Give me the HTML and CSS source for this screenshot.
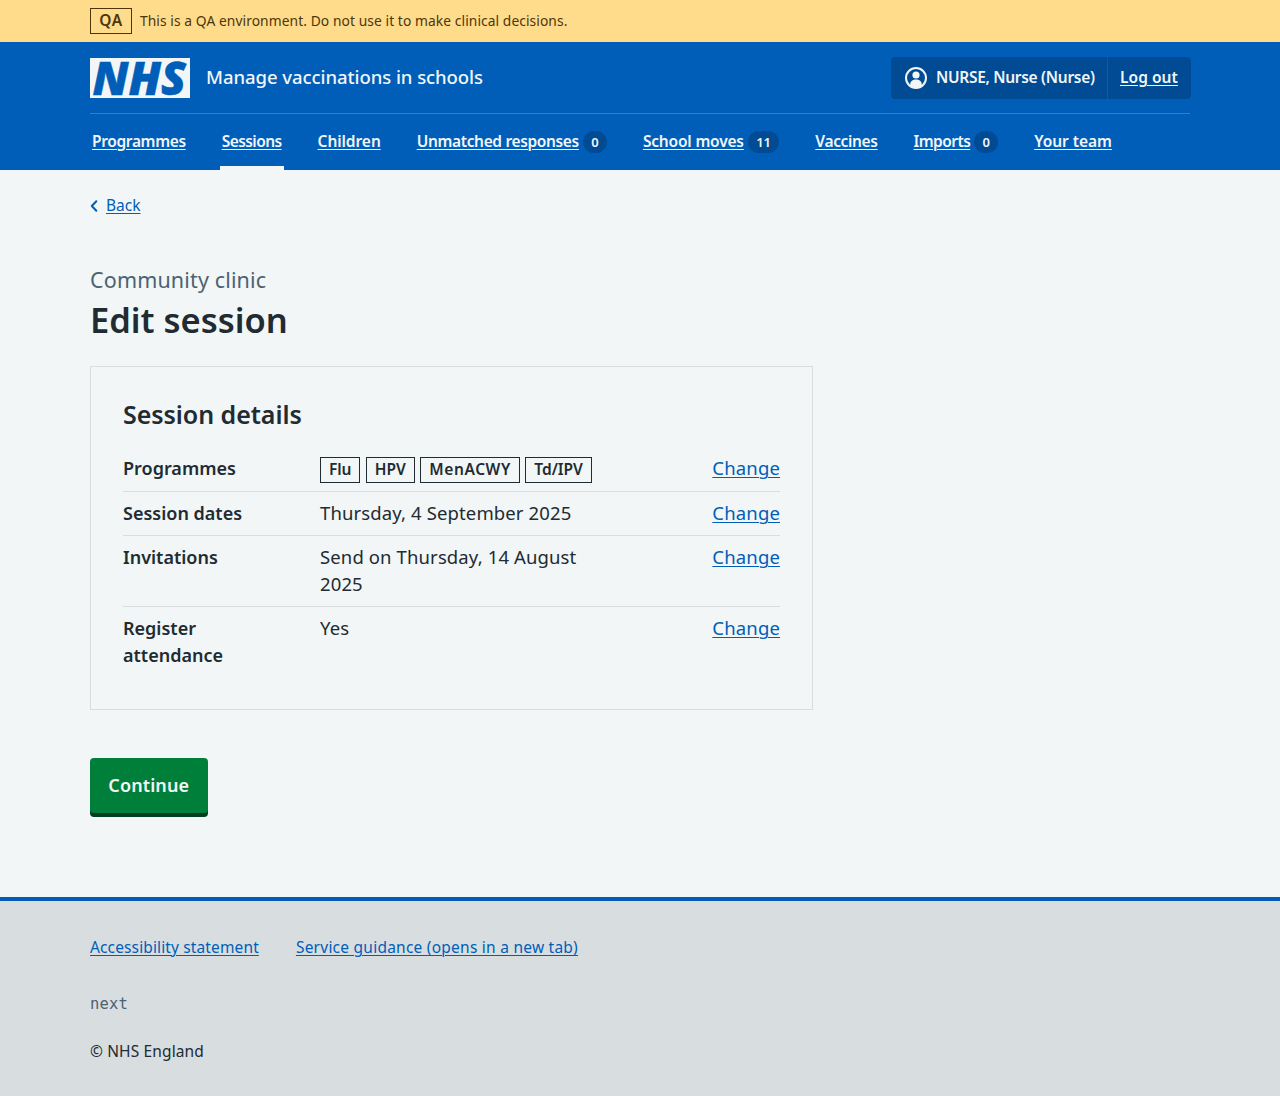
FILE: index.html
```html
<!DOCTYPE html>
<html lang="en">
<head>
<meta charset="utf-8">
<title>Edit session</title>
<link rel="stylesheet" href="styles.css">
</head>
<body>
<div class="environment">
  <div class="container environment-row">
    <strong class="environment-tag">QA</strong>
    <span class="environment-text">This is a QA environment. Do not use it to make clinical decisions.</span>
  </div>
</div>
<header class="header">
  <div class="container header-top">
    <a class="brand" href="#">
      <svg class="logo" viewBox="0 0 100 40" role="img" aria-label="NHS">
        <rect width="100" height="40" fill="#f2f6f7"/>
        <text class="logo-text" x="2.500" y="36.500" textLength="93.500" lengthAdjust="spacingAndGlyphs">NHS</text>
      </svg>
      <span class="service">Manage vaccinations in schools</span>
    </a>
    <div class="account">
      <div class="account-user">
        <svg class="user-icon" viewBox="0 0 24 24" aria-hidden="true">
          <circle cx="12" cy="12" r="10" fill="none" stroke="currentColor" stroke-width="2"/>
          <circle cx="12" cy="9" r="3.600" fill="currentColor"/>
          <path d="M6.200 20v-1.500c0-3.200 2.600-5 5.800-5s5.800 1.800 5.800 5V20a10 10 0 0 1-11.600 0z" fill="currentColor"/>
        </svg>
        <span>NURSE, Nurse (Nurse)</span>
      </div>
      <div class="account-logout"><a href="#">Log out</a></div>
    </div>
  </div>
  <nav class="container nav">
    <a class="nav-item" href="#"><span class="nav-label">Programmes</span></a>
    <a class="nav-item current tight" href="#"><span class="nav-label">Sessions</span></a>
    <a class="nav-item loose" href="#"><span class="nav-label">Children</span></a>
    <a class="nav-item" href="#"><span class="nav-label">Unmatched responses</span><span class="count">0</span></a>
    <a class="nav-item slack" href="#"><span class="nav-label">School moves</span><span class="count">11</span></a>
    <a class="nav-item" href="#"><span class="nav-label">Vaccines</span></a>
    <a class="nav-item tight" href="#"><span class="nav-label">Imports</span><span class="count">0</span></a>
    <a class="nav-item loose" href="#"><span class="nav-label">Your team</span></a>
  </nav>
</header>
<main class="container main">
  <a class="back" href="#">
    <svg class="chevron" viewBox="0 0 8 12" aria-hidden="true"><path d="M6.300 1.200 1.800 6l4.500 4.800" fill="none" stroke="currentColor" stroke-width="2" stroke-linecap="round" stroke-linejoin="round"/></svg>
    <span>Back</span>
  </a>
  <h1 class="title"><span class="caption">Community clinic</span><span class="heading">Edit session</span></h1>
  <section class="card">
    <h2 class="card-title">Session details</h2>
    <dl class="summary">
      <div class="row">
        <dt>Programmes</dt>
        <dd class="value tags"><strong class="tag tag-flu">Flu</strong><strong class="tag tag-hpv">HPV</strong><strong class="tag tag-menacwy">MenACWY</strong><strong class="tag">Td/IPV</strong></dd>
        <dd class="action"><a href="#">Change</a></dd>
      </div>
      <div class="row">
        <dt>Session dates</dt>
        <dd class="value">Thursday, 4 September 2025</dd>
        <dd class="action"><a href="#">Change</a></dd>
      </div>
      <div class="row">
        <dt>Invitations</dt>
        <dd class="value">Send on Thursday, 14 August<br>2025</dd>
        <dd class="action"><a href="#">Change</a></dd>
      </div>
      <div class="row">
        <dt>Register<br>attendance</dt>
        <dd class="value">Yes</dd>
        <dd class="action"><a href="#">Change</a></dd>
      </div>
    </dl>
  </section>
  <button class="button" type="button">Continue</button>
</main>
<footer class="footer">
  <div class="container">
    <div class="footer-links"><a href="#">Accessibility statement</a><a href="#">Service guidance (opens in a new tab)</a></div>
    <p class="version">next</p>
    <p class="copyright">© NHS England</p>
  </div>
</footer>
</body>
</html>
```
FILE: styles.css
```css
* { box-sizing: border-box; }
body {
  margin: 0;
  min-height: 1096px;
  display: flex;
  flex-direction: column;
  background: #f2f6f7;
  color: #212b32;
  font-family: "Noto Sans", "Open Sans", sans-serif;
  font-size: 18px;
  line-height: 27px;
}
a { color: #005eb8; text-underline-offset: 2px; text-decoration-thickness: 1px; }
.container { width: 1100px; margin: 0 auto; }

.environment { height: 42px; background: #ffdb8c; color: #4d3708; }
.environment-row { height: 42px; display: flex; align-items: center; gap: 8px; }
.environment-tag {
  height: 26px;
  width: 42px;
  border: 1px solid #4d3708;
  font-size: 15.5px;
  letter-spacing: 0.5px;
  font-weight: 600;
  line-height: 23px;
  text-align: center;
}
.environment-text { padding-bottom: 2px; font-size: 13.8px; letter-spacing: 0.08px; }

.header { height: 128px; background: #005eb8; color: #f2f6f7; }
.header a { color: #f2f6f7; }
.header-top {
  height: 72px;
  display: flex;
  align-items: center;
  justify-content: space-between;
  border-bottom: 1px solid #337ec6;
}
.brand { display: flex; align-items: center; gap: 16px; text-decoration: none; }
.logo { width: 100px; height: 40px; display: block; overflow: visible; }
.logo-text { font: italic 800 45.5px "Open Sans", "Noto Sans", sans-serif; fill: #005eb8; stroke: #005eb8; stroke-width: 0.5px; }
.service { padding-bottom: 2px; font-size: 18.5px; font-weight: 500; letter-spacing: -0.06px; }
.account {
  display: flex;
  height: 42px;
  width: 300px;
  margin-right: -1px;
  border-radius: 4px;
  background: #004b93;
  font-size: 15.5px;
  letter-spacing: -0.3px;
  font-weight: 600;
}
.account-user { flex: 1; display: flex; align-items: center; gap: 8px; padding-left: 13px; }
.user-icon { width: 24px; height: 24px; }
.account-logout { width: 84px; padding-left: 12px; display: flex; align-items: center; border-left: 1px solid #005eb8; letter-spacing: 0.06px; }
.nav { height: 56px; display: flex; gap: 32px; }
.nav-item {
  display: flex;
  align-items: center;
  padding: 0 2px 2px;
  font-size: 15.5px;
  letter-spacing: -0.35px;
  font-weight: 600;
  text-decoration: none;
}
.nav-label { text-decoration: underline; text-decoration-thickness: 1px; text-underline-offset: 2px; }
.tight { letter-spacing: -0.56px; }
.loose { letter-spacing: -0.06px; }
.slack { letter-spacing: -0.18px; }
.current { box-shadow: inset 0 -4px #f2f6f7; }
.count {
  margin: 2px 0 0 4px;
  padding: 0 8.3px;
  height: 22px;
  border-radius: 11px;
  background: #004b93;
  font-size: 13px;
  line-height: 22px;
  letter-spacing: 0;
}

.main { flex: 1; display: flex; flex-direction: column; align-items: flex-start; padding-top: 24px; }
.back { display: flex; align-items: center; gap: 8px; height: 23px; margin-bottom: 1px; font-size: 15.5px; }
.chevron { width: 8px; height: 12px; }
.title { margin: 47px 0 0; display: flex; flex-direction: column; }
.caption { font-size: 21.5px; line-height: 30px; font-weight: 400; color: #4c6272; letter-spacing: 0.15px; }
.heading { padding-top: 1px; font-size: 34.5px; line-height: 48px; font-weight: 600; }
.card { width: 723px; height: 344px; margin-top: 22px; padding: 31px 32px; border: 1px solid #d8dde0; }
.card-title { margin: 0 0 17px; font-size: 25px; line-height: 32px; font-weight: 600; letter-spacing: -0.05px; }
.summary { margin: 0; }
.row { display: grid; grid-template-columns: 197px 1fr 100px; padding: 8px 0; border-bottom: 1px solid #d8dde0; }
.row:last-child { border-bottom: 0; }
dt { font-weight: 600; }
dd { margin: -1px 0 1px; }
.value { font-size: 18.5px; letter-spacing: 0.12px; }
.tags { display: flex; gap: 5.3px; margin: 0; padding-top: 2px; letter-spacing: 0; }
.tag { height: 26px; padding: 0 8px; border: 1px solid #212b32; font-size: 15.5px; font-weight: 600; line-height: 22px; }
.tag-flu { letter-spacing: -0.1px; }
.tag-hpv { letter-spacing: 0.1px; }
.tag-menacwy { letter-spacing: 0.6px; }
.action { text-align: right; font-size: 18.5px; letter-spacing: 0.15px; }
.button {
  width: 117.5px;
  height: 55px;
  margin-top: 48px;
  padding: 0;
  border: 0;
  border-radius: 4px;
  background: #007f3b;
  box-shadow: 0 4px #00401e;
  color: #f2f6f7;
  font: 600 18px/27px "Noto Sans", "Open Sans", sans-serif;
  letter-spacing: 0.1px;
}

.footer { height: 199px; border-top: 4px solid #005eb8; background: #d8dde0; padding-top: 34px; font-size: 15.5px; line-height: 24px; letter-spacing: 0.13px; }
.footer-links { display: flex; gap: 37px; }
.footer-links a:last-child { letter-spacing: 0.24px; }
.version { margin: 33px 0 0; color: #4c6272; font-family: "DejaVu Sans Mono", monospace; }
.copyright { margin: 23px 0 0; }
```
